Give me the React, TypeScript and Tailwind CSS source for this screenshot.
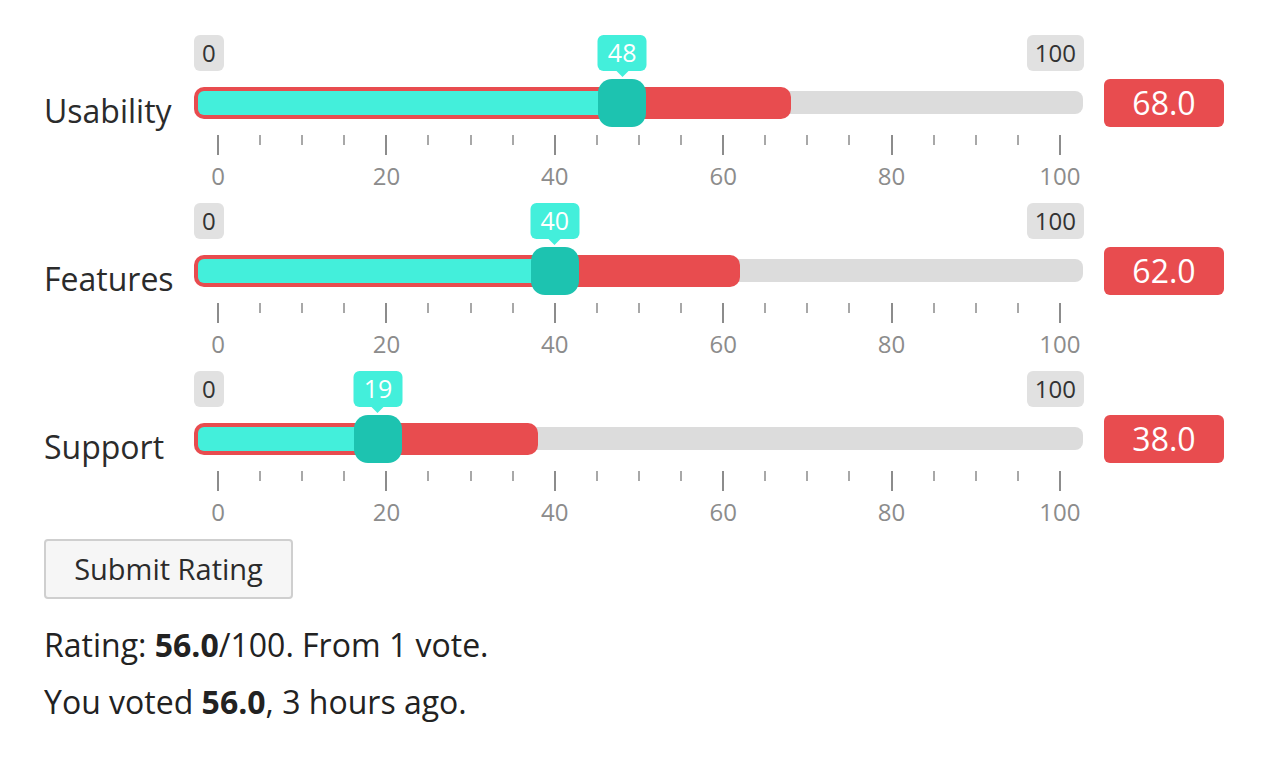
import React from 'react';

interface Criterion {
  label: string;
  handle: number;
  average: number;
}

const criteria: Criterion[] = [
  { label: 'Usability', handle: 48, average: 68 },
  { label: 'Features', handle: 40, average: 62 },
  { label: 'Support', handle: 19, average: 38 },
];

// track geometry: values map onto 842px, inset by half a handle
const INSET = 24;
const SPAN = 842;
const toX = (v: number) => INSET + (v / 100) * SPAN;

const ticks = Array.from({ length: 21 }, (_, i) => i * 5);
const tickLabels = [0, 20, 40, 60, 80, 100];

function RatingSlider({ item }: { item: Criterion }) {
  const handleX = toX(item.handle);
  const avgX = toX(item.average);

  return (
    <div className="flex h-[168px]">
      <div className="w-[150px] pt-[56px] text-[32px] leading-[40px] text-[#2b2b2b]">{item.label}</div>

      <div className="relative w-[890px]">
        <div className="flex h-[36px] justify-between">
          <span className="rounded-[6px] bg-[#e1e1e1] px-[8px] text-[24px] leading-[36px] text-[#333]">0</span>
          <span className="rounded-[6px] bg-[#e1e1e1] px-[8px] text-[24px] leading-[36px] text-[#333]">100</span>
        </div>

        {/* value bubble */}
        <div
          className="absolute top-0 flex h-[36px] w-[49px] -translate-x-1/2 items-center justify-center rounded-[6px] bg-[#43efdb] text-[25px] text-white"
          style={{ left: handleX }}
        >
          {item.handle}
          <span className="absolute left-1/2 top-full -translate-x-1/2 border-x-[6px] border-t-[6px] border-x-transparent border-t-[#43efdb]" />
        </div>

        <div className="relative mt-[8px] h-[48px]">
          <div className="absolute left-0 right-[1px] top-[12px] h-[23px] rounded-[8px] bg-[#dcdcdc]" />
          <div className="absolute left-0 top-[8px] h-[32px] rounded-[10px] bg-[#e84c4f]" style={{ width: avgX }} />
          <div
            className="absolute left-[4px] top-[12px] h-[24px] rounded-l-[6px] bg-[#43efdb]"
            style={{ width: handleX - 4 }}
          />
          <div
            className="absolute top-0 h-[48px] w-[48px] rounded-[14px] bg-[#1dc3b0]"
            style={{ left: handleX - 24 }}
          />
        </div>

        <div className="mt-[8px] flex h-[20px] justify-between px-[23px]">
          {ticks.map((t) =>
            t % 20 === 0 ? (
              <div key={t} className="h-[20px] w-[2px] bg-[#8c8c8c]" />
            ) : (
              <div key={t} className="h-[10px] w-[2px] bg-[#a8a8a8]" />
            )
          )}
        </div>

        <div className="mt-[6px] flex justify-between">
          {tickLabels.map((t) => (
            <span key={t} className="w-[48px] text-center text-[24px] leading-[30px] text-[#8c8c8c]">
              {t}
            </span>
          ))}
        </div>
      </div>

      <div className="ml-[20px] mt-[44px] flex h-[48px] w-[120px] items-center justify-center rounded-[6px] bg-[#e84c4f] text-[32px] text-white">
        {item.average.toFixed(1)}
      </div>
    </div>
  );
}

export default function App() {
  return (
    <div className="bg-white pl-[44px] pt-[35px] font-['Open_Sans',sans-serif] text-[#222]">
      {criteria.map((item) => (
        <RatingSlider key={item.label} item={item} />
      ))}

      <button className="h-[60px] w-[249px] rounded-[4px] border-2 border-[#cfcfcf] bg-[#f6f6f6] text-[29px] text-[#2b2b2b]">
        Submit Rating
      </button>

      <p className="mt-[24px] text-[32px] leading-[44px]">
        Rating: <b>56.0</b>/100. From 1 vote.
      </p>
      <p className="mt-[13px] text-[32px] leading-[44px]">
        You voted <b>56.0</b>, 3 hours ago.
      </p>
    </div>
  );
}
